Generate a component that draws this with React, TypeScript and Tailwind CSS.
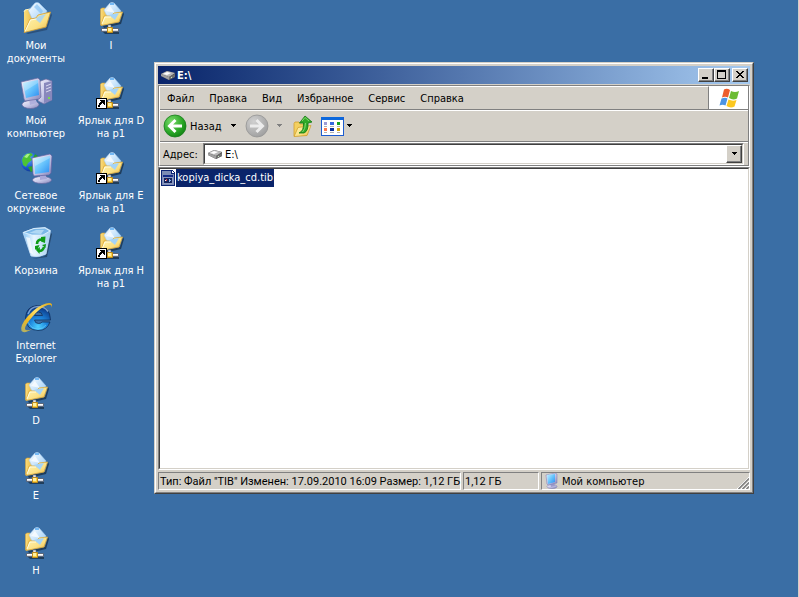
import type { ReactNode } from "react";

const raised =
  "border border-t-white border-l-white border-r-[#404040] border-b-[#404040] bg-[#d4d0c8] shadow-[inset_-1px_-1px_0_#808080]";
const sunken = "border border-t-[#808080] border-l-[#808080] border-r-white border-b-white";
const sunkenInner =
  "border border-t-[#404040] border-l-[#404040] border-r-[#d4d0c8] border-b-[#d4d0c8]";

function Gradients() {
  return (
    <svg className="absolute size-0" aria-hidden="true">
      <defs>
        <linearGradient id="folder" x1="0" y1="0" x2="1" y2="1">
          <stop offset="0" stopColor="#fff6b8" />
          <stop offset="0.6" stopColor="#fbe184" />
          <stop offset="1" stopColor="#e9b23c" />
        </linearGradient>
        <linearGradient id="folderBack" x1="0" y1="0" x2="1" y2="0">
          <stop offset="0" stopColor="#fbdc7a" />
          <stop offset="1" stopColor="#e8b640" />
        </linearGradient>
        <linearGradient id="paper" x1="0" y1="0" x2="1" y2="1">
          <stop offset="0" stopColor="#ffffff" />
          <stop offset="0.5" stopColor="#c8e4fc" />
          <stop offset="1" stopColor="#8cc4f4" />
        </linearGradient>
        <linearGradient id="screen" x1="0" y1="0" x2="1" y2="1">
          <stop offset="0" stopColor="#c4f0ff" />
          <stop offset="0.5" stopColor="#68c4fc" />
          <stop offset="1" stopColor="#2c8cf0" />
        </linearGradient>
        <linearGradient id="plastic" x1="0" y1="0" x2="1" y2="1">
          <stop offset="0" stopColor="#f4f4fc" />
          <stop offset="0.5" stopColor="#c8c8e8" />
          <stop offset="1" stopColor="#8484b8" />
        </linearGradient>
        <radialGradient id="globe" cx="0.35" cy="0.3" r="0.8">
          <stop offset="0" stopColor="#6cb4fc" />
          <stop offset="0.6" stopColor="#1c5cd0" />
          <stop offset="1" stopColor="#0c2c80" />
        </radialGradient>
        <linearGradient id="bin" x1="0" y1="0" x2="1" y2="0">
          <stop offset="0" stopColor="#8cc8f8" />
          <stop offset="0.4" stopColor="#e8f6ff" />
          <stop offset="1" stopColor="#a4d0f0" />
        </linearGradient>
        <radialGradient id="ie" cx="0.5" cy="0.85" r="0.8">
          <stop offset="0" stopColor="#4cd0ff" />
          <stop offset="0.45" stopColor="#1c84dc" />
          <stop offset="1" stopColor="#0c3480" />
        </radialGradient>
        <linearGradient id="swoosh" x1="0" y1="1" x2="1" y2="0">
          <stop offset="0" stopColor="#a8b070" />
          <stop offset="0.3" stopColor="#f0b820" />
          <stop offset="0.6" stopColor="#fce068" />
          <stop offset="1" stopColor="#e0a818" />
        </linearGradient>
        <radialGradient id="go" cx="0.35" cy="0.3" r="0.8">
          <stop offset="0" stopColor="#7cdc6c" />
          <stop offset="0.6" stopColor="#2ca828" />
          <stop offset="1" stopColor="#0c7c10" />
        </radialGradient>
        <radialGradient id="idle" cx="0.35" cy="0.3" r="0.8">
          <stop offset="0" stopColor="#d0d0d0" />
          <stop offset="1" stopColor="#9c9c9c" />
        </radialGradient>
      </defs>
    </svg>
  );
}

function IconBox({ children }: { children: ReactNode }) {
  return (
    <svg viewBox="0 0 32 32" className="size-8 shrink-0 overflow-visible" aria-hidden="true">
      {children}
    </svg>
  );
}

function DocumentsIcon() {
  return (
    <IconBox>
      <path d="M6 31 26 26 31 11l1 2-5 15L8 32Z" fill="#1c3454" opacity="0.5" />
      <path d="M4 10 5 8l5-1 2 2 2 5-8 15-2 1Z" fill="url(#folderBack)" />
      <path d="M4 10 5 8l5-1 1 2" fill="none" stroke="#fff4c0" />
      <path d="M8.500 8.500 15 1q2-1 4 0l8 8-5 12-9-2Z" fill="url(#paper)" stroke="#9cc8f0" strokeWidth="0.600" />
      <path d="m14 5 3-3 6 7-2 3Z" fill="#7cbcf4" opacity="0.600" />
      <path d="M4 30.500 10 17l6-1 2-3 12.500-3L26 25Z" fill="url(#folder)" stroke="#d49c2c" strokeWidth="0.800" />
      <path d="m15 17 4-3 7-2-6 9Z" fill="#a8d4f4" opacity="0.900" />
      <path d="M5 29.500 10.500 18l6-1" fill="none" stroke="#fffce0" />
    </IconBox>
  );
}

function NetFolderIcon({ shortcut }: { shortcut?: boolean }) {
  return (
    <IconBox>
      <path d="M8 24 25 20 28 10l1 2-3 10-17 4Z" fill="#14283c" opacity="0.700" />
      <path d="M8 30h16v2H10Z" fill="#14283c" opacity="0.700" />
      <path d="M5.500 23V7L7 6h3l1 2 2 1v13Z" fill="url(#folderBack)" stroke="#d8a43c" strokeWidth="0.600" />
      <path d="m9 8 6-7q2-1 4 0l7 8-6 10-8-5Z" fill="url(#paper)" stroke="#a8d0f4" strokeWidth="0.600" />
      <path d="M15 1h4v2h-4Z" fill="#74b8f4" />
      <path d="m11 9 4-5 5 7Z" fill="#fff" opacity="0.700" />
      <path d="M6 23.500 9 14l7 0 3-3 8.500-1L24 20Z" fill="url(#folder)" stroke="#dca838" strokeWidth="0.800" />
      <path d="m14 13 4-1 6-1-4 7Z" fill="#a4d4f8" />
      <path d="M7 22 10 15h6" fill="none" stroke="#fffce0" />
      <path d="M13 23h3v4h-3Z" fill="#e4e4e8" stroke="#606878" strokeWidth="0.500" />
      <path d="M6.500 26.500h17v3h-17Z" fill="#d8dce4" stroke="#505868" strokeWidth="0.800" />
      <path d="M7 27.500h16" stroke="#fff" />
      <path d="M12.500 25.500h5v5h-5Z" fill="#fcd040" stroke="#c08c1c" />
      <path d="M13 26h3v3h-3Z" fill="#fff0a0" />
      {shortcut && (
        <g shapeRendering="crispEdges">
          <path d="M1 21h11v11H1Z" fill="#000" />
          <path d="M2 22h9v9H2Z" fill="#fff" />
          <path d="M5 23h5v5H9v-1H8v-1H7v1H6v1H5v2H3v-2h1v-2h1v-1h1v-1H5Z" fill="#000" />
        </g>
      )}
    </IconBox>
  );
}

function ComputerIcon() {
  return (
    <IconBox>
      <path d="m18 5 8-3 6 2v19l-8 4-6-3Z" fill="url(#plastic)" stroke="#6868a0" strokeWidth="0.700" />
      <path d="m24 6 8-2v19l-8 3Z" fill="#8888bc" />
      <path d="m26 9 5-2M26 12l5-2M26 15l5-2" stroke="#d8d8f0" />
      <path d="M28 20h2v2h-2Z" fill="#7cdc4c" />
      <ellipse cx="10.500" cy="27.500" rx="8.500" ry="4" fill="url(#plastic)" stroke="#6868a0" strokeWidth="0.700" />
      <path d="m9 21 6-1 2 6-7 2Z" fill="#b0b0dc" />
      <path d="m1 5 17-4 2 2 1 17-2 2-14 2-1-2Z" fill="url(#plastic)" stroke="#6868a0" strokeWidth="0.700" />
      <path d="m3 6 15-3 1 15L6 21Z" fill="url(#screen)" />
      <path d="m3 6 15-3v3L5 14Z" fill="#fff" opacity="0.250" />
    </IconBox>
  );
}

function NetworkIcon() {
  return (
    <IconBox>
      <circle cx="10.500" cy="10" r="9.500" fill="url(#globe)" />
      <path d="M2 8q2-7 9-7l2 2-3 2 2 3-4 3-2 4-3-2Z" fill="#4cc434" />
      <path d="M15 2q4 2 5 6l-5 2-2-4ZM8 15l5-1 2 4-4 2Z" fill="#2ca428" />
      <path d="m4 5 3-3 3 0-3 4Z" fill="#a8f084" />
      <ellipse cx="22" cy="28" rx="9.500" ry="3.500" fill="url(#plastic)" stroke="#6868a0" strokeWidth="0.700" />
      <path d="m20 21 5 0 2 6-7 1Z" fill="#a8a8d8" />
      <path d="m12 6 18-4 2 2-1 17-2 2-15 1-1-2Z" fill="url(#plastic)" stroke="#6060a0" strokeWidth="0.700" />
      <path d="m14 7 16-3-1 16-14 2Z" fill="url(#screen)" />
      <path d="m14 7 16-3v2L15 14Z" fill="#fff" opacity="0.300" />
    </IconBox>
  );
}

function BinIcon() {
  return (
    <IconBox>
      <path d="m25 29 6-23 1 1-5 23-15 2Z" fill="#14283c" opacity="0.500" />
      <path d="M3 5.500 14 1.500l11-1 5.500 3L26 27q-7 4-15 2Z" fill="url(#bin)" stroke="#c4e0f8" strokeWidth="0.800" />
      <path d="M3.500 5.500 14 1.500l11-.500 5 3-7 4-11 0Z" fill="#7cb8e8" stroke="#e4f4ff" strokeWidth="0.800" />
      <path d="m9 6 7-3 8 0-3 4Z" fill="#b0d8f4" />
      <path d="m6 10 4 16 3 1-3-16Z" fill="#fff" opacity="0.700" />
      <path d="M17 17q0-4.500 5-4.500M24 20q-1 4-5 4" fill="none" stroke="#109c18" strokeWidth="2.600" />
      <path d="m21 10 4.500-.500-.500 6.500-4-1.500ZM19.500 27 16 23l4-3ZM15 19l4.500-1-2 4.500h-2.500ZM22 18l4-1-.500 4Z" fill="#109c18" />
    </IconBox>
  );
}

function ExplorerIcon() {
  return (
    <IconBox>
      <path
        d="M30.500 18H14.500q.500 3.500 4 3.500 2.500 0 3.500-1.500h8q-3 8.500-12 8.500Q6 28 5.500 16 6 4 18 3.500 30 4 30.500 18ZM14.500 13.500h8q-.500-3.500-4-3.500t-4 3.500Z"
        fill="url(#ie)"
        fillRule="evenodd"
        stroke="#12305c"
        strokeWidth="0.800"
      />
      <path d="M8 12q2-7 10-7.500 7 0 10 5" fill="none" stroke="#a4c8ec" strokeWidth="1.500" opacity="0.700" />
      <path d="M8 20q3 7 10 7 5 0 8-4" fill="none" stroke="#7ce0ff" opacity="0.500" />
      <path
        d="M31.500 6q2.500-6.500-5.500-4.500Q17 4 8 14-.500 24 1.500 29q2.500 3 11-2-6.500 2.500-7.500 0Q4.500 23.500 13 14 21 5 27.500 3q5-1 4 3Z"
        fill="url(#swoosh)"
      />
    </IconBox>
  );
}

function DriveIcon() {
  return (
    <svg viewBox="0 0 16 16" className="size-4 shrink-0" aria-hidden="true">
      <path d="m1 7 6-3 8 2v4l-6 3-8-4Z" fill="#484848" />
      <path d="m1 7 6-3 8 2-6 4Z" fill="#b8b8b8" />
      <path d="m3 7 4-2 4 1-4 2Z" fill="#fff" />
      <path d="m9 10 6-3v3l-6 3Z" fill="#707070" />
      <path d="m1 7 8 3v3L1 9Z" fill="#a0a0a0" />
      <path d="M11 10h1v1h-1Z" fill="#c8e4c0" />
    </svg>
  );
}

function MiniComputerIcon() {
  return (
    <svg viewBox="0 0 16 16" className="size-4 shrink-0" aria-hidden="true">
      <ellipse cx="8" cy="13.500" rx="5" ry="2" fill="url(#plastic)" stroke="#7474a8" strokeWidth="0.500" />
      <path d="m6 10 4-1 1 4-4 1Z" fill="#9c9ccc" />
      <path d="m2 2 9-2 2 1v9l-9 2-1-1Z" fill="url(#plastic)" stroke="#7474b0" strokeWidth="0.500" />
      <path d="m3 2 8-1v8l-7 2Z" fill="url(#screen)" />
    </svg>
  );
}

function FileIcon() {
  return (
    <svg viewBox="0 0 16 16" className="size-4 shrink-0" shapeRendering="crispEdges" aria-hidden="true">
      <path d="M1 0h11l3 3v13H1Z" fill="#0c2474" />
      <path d="M2 1h9v3h3v11H2Z" fill="#7c8cb4" />
      <path d="M12 1v2h2Z" fill="#fff" />
      <path d="M3 5h10v9H3Z" fill="#8c98c0" />
      <path d="M3 5h10v2H3Z" fill="#142c88" />
      <path d="M4 8h8v5H4Z" fill="#14245c" />
      <path d="M5 10h2v1H5Z" fill="#fff" />
      <path d="M6 9h1v2H6Z" fill="#e44848" />
      <path d="M9 9h1v3H9ZM10 10h1v1h-1Z" fill="#88b4f8" />
    </svg>
  );
}

function NavCircle({ forward }: { forward?: boolean }) {
  return (
    <svg viewBox="0 0 24 24" className="size-6 shrink-0" aria-hidden="true">
      <circle cx="12" cy="12" r="11" fill={forward ? "url(#idle)" : "url(#go)"} stroke={forward ? "#949494" : "#187c1c"} strokeWidth="0.800" />
      <path
        d={forward ? "M5 12h12M11.500 6l6 6-6 6" : "M19 12H7M12.500 6l-6 6 6 6"}
        fill="none"
        stroke={forward ? "#ececec" : "#ffffff"}
        strokeWidth="3"
      />
    </svg>
  );
}

function UpFolderIcon() {
  return (
    <svg viewBox="0 0 20 24" className="h-6 w-5 shrink-0" aria-hidden="true">
      <path d="M1 9.500 2 8h4l1 2h7v11L1 22Z" fill="#f4d060" stroke="#d0a030" strokeWidth="0.800" />
      <path d="m1 22.500 4-9 13-2-4 10Z" fill="url(#folder)" stroke="#d0a030" strokeWidth="0.800" />
      <path d="M6 19q5-2 4.500-10H6.500L12 2l7 6-4 1q.500 8-4 10Z" fill="#30a828" stroke="#107810" strokeWidth="0.800" />
      <path d="m9 7 3-3.500 4 3.500M12.500 9q0 6-3 9" fill="none" stroke="#84dc6c" />
    </svg>
  );
}

function ViewsIcon() {
  return (
    <svg viewBox="0 0 24 20" className="h-5 w-6 shrink-0" shapeRendering="crispEdges" aria-hidden="true">
      <path d="M1 1h22v18H1Z" fill="#fff" stroke="#1c5cd0" />
      <path d="M1 1h22v3H1Z" fill="#0c68dc" />
      <path d="M4 6h3v3H4Z" fill="#9c9cd4" />
      <path d="M10 6h4v3h-4Z" fill="#3468e0" />
      <path d="M17 6h3v3h-3Z" fill="#14a424" />
      <path d="M4 12h3v3H4Z" fill="#fc7850" />
      <path d="M10 12h4v3h-4Z" fill="#08309c" />
      <path d="M17 12h3v3h-3Z" fill="#d4a408" />
      <path d="M4 10.500h3M10 10.500h4M17 10.500h3M4 16.500h3M10 16.500h4M17 16.500h3" stroke="#b0b0b0" />
    </svg>
  );
}

function WindowsFlag() {
  return (
    <svg viewBox="0 0 20 20" className="size-5" aria-hidden="true">
      <path d="M5 1.500q3-1.500 6 .500L9 9.500Q6 8 3 9.500Z" fill="#ec5c2c" />
      <path d="M12 3q4 2 8 0l-2 7.500q-4 2-8-.500Z" fill="#6cbc34" />
      <path d="M2.500 10.500q4-1.500 6 0l-2 7q-3-1.500-6 0Z" fill="#4c94e4" />
      <path d="M9.500 11.500q4 2 8 .500l-2 6.500q-4 2-8-.500Z" fill="#fcc820" />
    </svg>
  );
}

function DownArrow({ faded }: { faded?: boolean }) {
  return (
    <svg viewBox="0 0 7 4" className="h-1 w-[7px] shrink-0" shapeRendering="crispEdges" aria-hidden="true">
      <path d="M1 0h5v1H5v1H4v1H3V2H2V1H1Z" fill={faded ? "#808080" : "#000"} />
    </svg>
  );
}

type Shortcut = { label: string; icon: ReactNode };

const columns: Shortcut[][] = [
  [
    { label: "Мои документы", icon: <DocumentsIcon /> },
    { label: "Мой компьютер", icon: <ComputerIcon /> },
    { label: "Сетевое окружение", icon: <NetworkIcon /> },
    { label: "Корзина", icon: <BinIcon /> },
    { label: "Internet Explorer", icon: <ExplorerIcon /> },
    { label: "D", icon: <NetFolderIcon /> },
    { label: "E", icon: <NetFolderIcon /> },
    { label: "H", icon: <NetFolderIcon /> },
  ],
  [
    { label: "I", icon: <NetFolderIcon /> },
    { label: "Ярлык для D на p1", icon: <NetFolderIcon shortcut /> },
    { label: "Ярлык для E на p1", icon: <NetFolderIcon shortcut /> },
    { label: "Ярлык для H на p1", icon: <NetFolderIcon shortcut /> },
  ],
];

const menus = ["Файл", "Правка", "Вид", "Избранное", "Сервис", "Справка"];

function TitleBar() {
  return (
    <header className="flex h-[18px] shrink-0 items-center bg-linear-to-r from-[#0a246a] to-[#a6caf0] px-0.5 text-white">
      <DriveIcon />
      <h1 className="ml-px flex-1 font-bold">E:\</h1>
      <button type="button" aria-label="Свернуть" className={`h-3.5 w-4 ${raised}`}>
        <svg viewBox="0 0 14 12" className="h-3 w-3.5" shapeRendering="crispEdges">
          <path d="M3 8h6v2H3Z" />
        </svg>
      </button>
      <button type="button" aria-label="Развернуть" className={`h-3.5 w-4 ${raised}`}>
        <svg viewBox="0 0 14 12" className="h-3 w-3.5" shapeRendering="crispEdges">
          <path d="M2 1h9v9H2ZM3 3v6h7V3Z" fillRule="evenodd" />
        </svg>
      </button>
      <button type="button" aria-label="Закрыть" className={`ml-0.5 h-3.5 w-4 ${raised}`}>
        <svg viewBox="0 0 14 12" className="h-3 w-3.5" shapeRendering="crispEdges">
          <path d="M3 2h2v1h1v1h2V3h1V2h2v1h-1v1H9v1H8v1h1v1h1v1h1v1H9V8H8V7H6v1H5v1H3V8h1V7h1V6h1V5H5V4H4V3H3Z" />
        </svg>
      </button>
    </header>
  );
}

function MenuBar() {
  return (
    <div className="flex h-6 border-b border-[#808080]">
      <nav className="flex flex-1 items-center gap-[15px] border-t border-r border-t-white border-r-[#808080] pl-[7px]">
        {menus.map((name) => (
          <button key={name} type="button">
            {name}
          </button>
        ))}
      </nav>
      <div className="flex w-[39px] items-center justify-center bg-white">
        <WindowsFlag />
      </div>
    </div>
  );
}

function ToolBar() {
  return (
    <div className="flex h-8 items-center border-t border-b border-t-white border-b-[#808080] pl-[3px]">
      <button type="button" className="flex items-center gap-[3px]">
        <NavCircle />
        Назад
      </button>
      <button type="button" aria-label="История назад" className="ml-2">
        <DownArrow />
      </button>
      <button type="button" aria-label="Вперед" className="ml-2">
        <NavCircle forward />
      </button>
      <button type="button" aria-label="История вперед" className="ml-[7px]">
        <DownArrow faded />
      </button>
      <button type="button" aria-label="Вверх" className="ml-2.5">
        <UpFolderIcon />
      </button>
      <button type="button" aria-label="Вид папки" className="ml-[7px] flex items-center gap-0.5">
        <ViewsIcon />
        <DownArrow />
      </button>
    </div>
  );
}

function AddressBar() {
  return (
    <div className="flex items-center border-t border-white pr-1">
      <label htmlFor="address" className="w-[43px] pl-[3px]">
        Адрес:
      </label>
      <div className={`flex-1 ${sunken}`}>
        <div className={`relative flex h-5 items-center bg-white pl-0.5 ${sunkenInner}`}>
          <DriveIcon />
          <select id="address" className="h-full flex-1 appearance-none bg-transparent pl-0.5 outline-none">
            <option>E:\</option>
          </select>
          <span className={`pointer-events-none absolute top-0 right-0 flex h-[18px] w-4 items-center justify-center ${raised}`}>
            <DownArrow />
          </span>
        </div>
      </div>
    </div>
  );
}

function StatusBar() {
  return (
    <footer className="mt-0.5 flex h-[18px] shrink-0 gap-0.5 whitespace-nowrap">
      <div className={`flex w-[303px] items-center pl-px font-[Roboto,sans-serif] ${sunken}`}>
        <span>Тип: Файл "TIB" Изменен: 17.09.2010 16:09 Размер: 1,12 ГБ</span>
      </div>
      <div className={`flex w-[76px] items-center pl-px font-[Roboto,sans-serif] ${sunken}`}>
        <span>1,12 ГБ</span>
      </div>
      <div className={`flex flex-1 items-center gap-0.5 pl-0.5 ${sunken}`}>
        <MiniComputerIcon />
        <span>Мой компьютер</span>
        <svg viewBox="0 0 12 12" className="mt-1 ml-auto size-3" aria-hidden="true">
          <path d="M0 12 12 0M4 12l8-8M8 12l4-4" stroke="#fff" />
          <path d="M1.500 12 12 1.500M5.500 12 12 5.500M9.500 12 12 9.500" stroke="#808080" strokeWidth="1.500" />
        </svg>
      </div>
    </footer>
  );
}

export default function App() {
  return (
    <main className="relative h-screen overflow-hidden border-r border-[#d4d0c8] bg-[#3a6ea5] font-['DejaVu_Sans_Condensed','DejaVu_Sans',sans-serif] text-[11px] leading-[13px] text-black">
      <Gradients />
      <div className="flex gap-[3px]">
        {columns.map((items, column) => (
          <ul key={column} className="w-[72px]">
            {items.map(({ label, icon }) => (
              <li key={label} className="h-[75px] pt-0.5">
                <button type="button" className="flex w-full flex-col items-center gap-[5px] text-white">
                  {icon}
                  <span>{label}</span>
                </button>
              </li>
            ))}
          </ul>
        ))}
      </div>

      <section
        aria-label="E:\"
        className="absolute top-[62px] right-[44px] bottom-[103px] left-[154px] border border-t-[#d4d0c8] border-r-[#404040] border-b-[#404040] border-l-[#d4d0c8]"
      >
        <div className="flex h-full flex-col border border-t-white border-r-[#808080] border-b-[#808080] border-l-white bg-[#d4d0c8] p-0.5">
          <TitleBar />
          <div className={`mt-px shrink-0 ${sunken}`}>
            <div className="border border-t-0 border-l-white border-r-[#808080] border-b-[#808080]">
              <MenuBar />
              <ToolBar />
              <AddressBar />
            </div>
          </div>
          <div className={`min-h-0 flex-1 ${sunken}`}>
            <div className={`h-full bg-white ${sunkenInner}`}>
              <button type="button" className="flex h-[18px] items-center">
                <FileIcon />
                <span className="bg-[#0a246a] px-px leading-[18px] text-white">kopiya_dicka_cd.tib</span>
              </button>
            </div>
          </div>
          <StatusBar />
        </div>
      </section>
    </main>
  );
}
